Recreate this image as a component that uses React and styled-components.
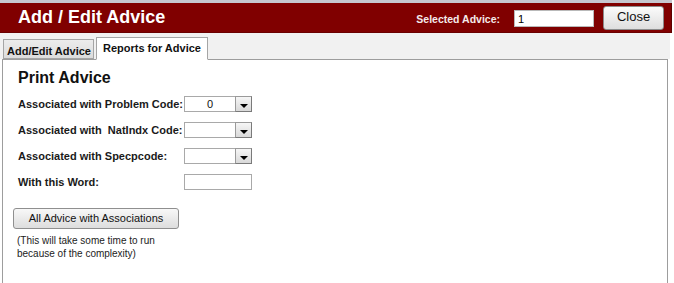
import React from "react";
import styled, { createGlobalStyle } from "styled-components";

const GlobalStyle = createGlobalStyle`
  html, body { margin: 0; padding: 0; background: #ffffff; }
  body { font-family: "Liberation Sans", Arial, sans-serif; color: #111; }
  * { box-sizing: border-box; }
`;

const Page = styled.div`
  width: 672px;
  height: 283px;
  display: flex;
  flex-direction: column;
  border-top: 3px solid #c6c7cf;
  overflow: hidden;
`;

const Header = styled.header`
  height: 30px;
  flex: none;
  background: #800000;
  border-right: 1px solid #5c0000;
  border-bottom: 1px solid #6a0000;
  display: flex;
  align-items: center;
  padding: 0 7px 0 18px;
`;

const Title = styled.h1`
  margin: 0;
  font-size: 18px;
  font-weight: bold;
  color: #ffffff;
  flex: 1;
  line-height: 21px;
`;

const HeaderLabel = styled.span`
  font-size: 10.5px;
  font-weight: bold;
  color: #f4eaea;
  margin-right: 14px;
  margin-top: 2px;
`;

const HeaderInput = styled.input`
  width: 80px;
  height: 17px;
  margin: 2px 9px 0 0;
  border: 1px solid #b9b9b9;
  padding: 0 3px;
  font-family: "Liberation Sans", Arial, sans-serif;
  font-size: 11px;
  color: #000;
  outline: none;
`;

const CloseButton = styled.button`
  width: 61px;
  height: 24px;
  border: 1px solid #8c8c8c;
  border-radius: 3px;
  background: linear-gradient(#fbfbfb, #dedede);
  font-family: "Liberation Sans", Arial, sans-serif;
  font-size: 13px;
  color: #111;
  padding: 0 0 2px;
`;

const TabBar = styled.nav`
  height: 26px;
  flex: none;
  width: 670px;
  background: #f1f1f1;
  display: flex;
  align-items: flex-end;
  padding-left: 3px;
  gap: 2px;
  position: relative;
  z-index: 1;
`;

const Tab = styled.div`
  font-size: 11px;
  font-weight: bold;
  color: #111;
  border: 1px solid #a5a5a5;
  border-bottom: ${(p) => (p.$active ? "1px solid #ffffff" : "1px solid #a5a5a5")};
  background: ${(p) => (p.$active ? "#ffffff" : "linear-gradient(#ececec, #dcdcdc)")};
  height: ${(p) => (p.$active ? "23px" : "20px")};
  margin-bottom: ${(p) => (p.$active ? "-1px" : "0")};
  padding: ${(p) => (p.$active ? "4px 6px 0" : "5px 2px 0 3px")};
  line-height: 13px;
  white-space: nowrap;
`;

const Panel = styled.section`
  flex: 1;
  width: 666px;
  margin-left: 2px;
  border: 1px solid #9d9d9d;
  border-bottom: none;
  background: #ffffff;
  padding: 8px 0 0 15px;
  display: flex;
  flex-direction: column;
  align-items: flex-start;
`;

const SectionTitle = styled.h2`
  margin: 0 0 8px;
  font-size: 16px;
  line-height: 20px;
  font-weight: bold;
  color: #111;
`;

const FormGrid = styled.div`
  display: grid;
  grid-template-columns: 166px auto;
  row-gap: 10px;
  align-items: center;
`;

const Label = styled.label`
  font-size: 11px;
  font-weight: bold;
  color: #1a1a1a;
  line-height: 16px;
`;

const SelectBox = styled.div`
  width: 68px;
  height: 16px;
  display: flex;
  border: 1px solid #a9a9a9;
  background: #fff;
`;

const SelectValue = styled.div`
  flex: 1;
  font-size: 11px;
  line-height: 14px;
  text-align: center;
  color: #111;
`;

const ArrowButton = styled.div`
  width: 17px;
  height: 16px;
  margin: -1px -1px 0 0;
  border: 1px solid #7a7a7a;
  border-top-color: #9a9a9a;
  border-left-color: #9a9a9a;
  background: linear-gradient(#f6f6f6, #d9d9d9);
  display: flex;
  align-items: center;
  justify-content: center;
  &::after {
    content: "";
    display: block;
    margin-top: 3px;
    border-left: 4px solid transparent;
    border-right: 4px solid transparent;
    border-top: 4px solid #000;
  }
`;

const TextBox = styled.input`
  width: 68px;
  height: 16px;
  border: 1px solid #a9a9a9;
  padding: 0 3px;
  font-size: 11px;
  outline: none;
`;

const ActionButton = styled.button`
  margin: 18px 0 0 -5px;
  width: 166px;
  height: 21px;
  border: 1px solid #8f8f8f;
  border-radius: 3px;
  background: linear-gradient(#f8f8f8, #dddddd);
  font-family: "Liberation Sans", Arial, sans-serif;
  font-size: 11px;
  color: #111;
  padding: 0 0 1px;
`;

const Note = styled.p`
  margin: 5px 0 0 -1px;
  font-size: 10px;
  line-height: 13px;
  color: #222;
`;

const SelectField = ({ value }) => (
  <SelectBox>
    <SelectValue>{value}</SelectValue>
    <ArrowButton />
  </SelectBox>
);

export default function App() {
  return (
    <>
      <GlobalStyle />
      <Page>
        <Header>
          <Title>Add / Edit Advice</Title>
          <HeaderLabel>Selected Advice:</HeaderLabel>
          <HeaderInput defaultValue="1" />
          <CloseButton>Close</CloseButton>
        </Header>
        <TabBar>
          <Tab>Add/Edit Advice</Tab>
          <Tab $active>Reports for Advice</Tab>
        </TabBar>
        <Panel>
          <SectionTitle>Print Advice</SectionTitle>
          <FormGrid>
            <Label>Associated with Problem Code:</Label>
            <SelectField value="0" />
            <Label>Associated with&nbsp; NatIndx Code:</Label>
            <SelectField value="" />
            <Label>Associated with Specpcode:</Label>
            <SelectField value="" />
            <Label>With this Word:</Label>
            <TextBox />
          </FormGrid>
          <ActionButton>All Advice with Associations</ActionButton>
          <Note>
            (This will take some time to run
            <br />
            because of the complexity)
          </Note>
        </Panel>
      </Page>
    </>
  );
}
